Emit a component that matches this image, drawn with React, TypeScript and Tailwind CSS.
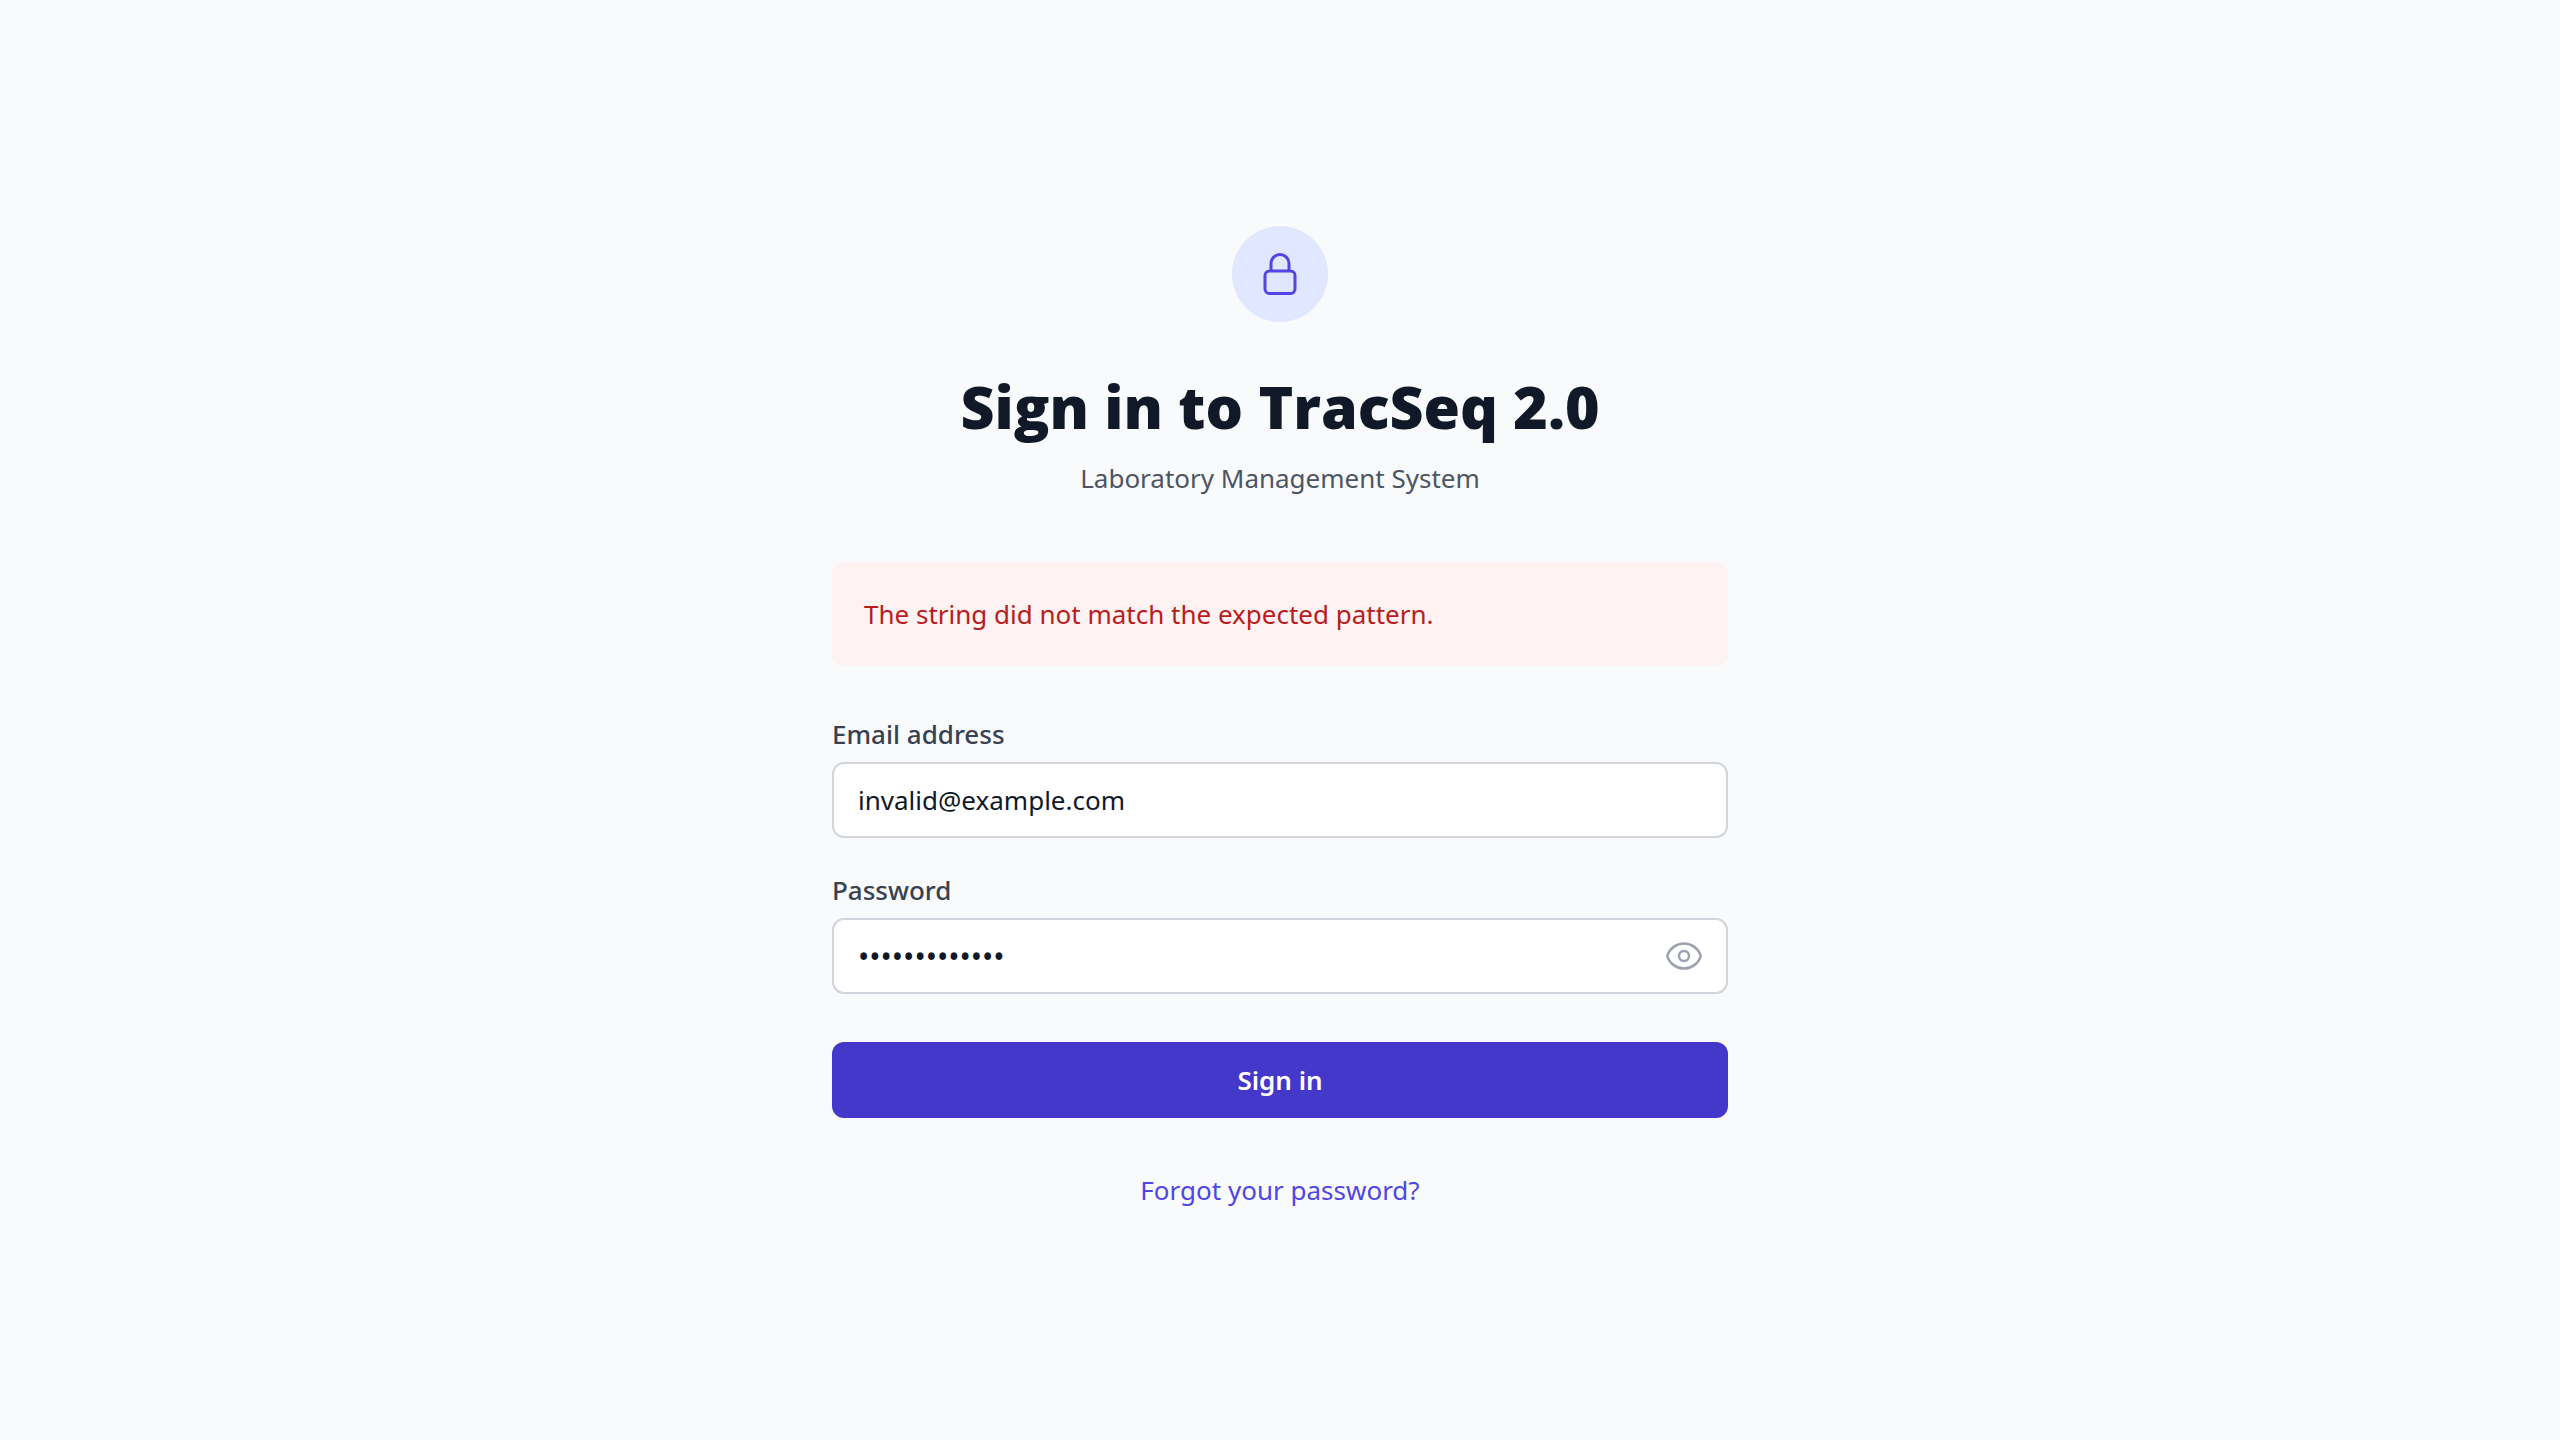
import { useState } from 'react';

function LockIcon() {
  return (
    <svg className="size-12 text-[#4f46e5]" viewBox="0 0 24 24" fill="none" stroke="currentColor" strokeWidth={1.5} strokeLinecap="round" strokeLinejoin="round" aria-hidden="true">
      <path d="M16.5 10.5V6.75a4.5 4.5 0 1 0-9 0v3.75m-.75 11.25h10.5a2.25 2.25 0 0 0 2.25-2.25v-6.75a2.25 2.25 0 0 0-2.25-2.25H6.75a2.25 2.25 0 0 0-2.25 2.25v6.75a2.25 2.25 0 0 0 2.25 2.25Z" />
    </svg>
  );
}

function EyeIcon() {
  return (
    <svg className="size-10" viewBox="0 0 24 24" fill="none" stroke="currentColor" strokeWidth={1.5} strokeLinecap="round" strokeLinejoin="round" aria-hidden="true">
      <path d="M2.036 12.322a1.012 1.012 0 0 1 0-.639C3.423 7.51 7.36 4.5 12 4.5c4.638 0 8.573 3.007 9.963 7.178.07.207.07.431 0 .639C20.577 16.49 16.64 19.5 12 19.5c-4.638 0-8.573-3.007-9.963-7.178Z" />
      <path d="M15 12a3 3 0 1 1-6 0 3 3 0 0 1 6 0Z" />
    </svg>
  );
}

const fieldClass =
  'block h-[76px] w-full rounded-xl border-2 border-[#d1d5db] bg-white px-6 leading-10 text-[#111827] outline-none';
const labelClass = 'block font-medium text-[#374151]';

export default function App() {
  const [email, setEmail] = useState('invalid@example.com');
  const [password, setPassword] = useState('wrongpassword');
  const [visible, setVisible] = useState(false);

  return (
    <div className="flex min-h-screen items-center justify-center bg-[#f9fafb] px-8 py-24 font-['Segoe_UI','Noto_Sans',sans-serif] text-[26px] leading-10">
      <main className="w-full max-w-4xl">
        <div className="mx-auto flex size-24 items-center justify-center rounded-full bg-[#e0e7ff]">
          <LockIcon />
        </div>
        <h2 className="mt-12 text-center font-['Segoe_UI','Open_Sans',sans-serif] text-[59px] leading-[72px] font-extrabold text-[#111827]">
          Sign in to TracSeq 2.0
        </h2>
        <p className="mt-4 text-center text-[#4b5563]">Laboratory Management System</p>

        <form className="mt-16" onSubmit={(e) => e.preventDefault()}>
          <div role="alert" className="rounded-xl bg-[#fef2f2] p-8 text-[#b91c1c]">
            The string did not match the expected pattern.
          </div>

          <div className="mt-12">
            <label htmlFor="email" className={labelClass}>Email address</label>
            <input id="email" type="email" value={email} onChange={(e) => setEmail(e.target.value)} className={`mt-2 text-[26px] ${fieldClass}`} />
          </div>

          <div className="mt-8">
            <label htmlFor="password" className={labelClass}>Password</label>
            <div className="relative mt-2">
              <input
                id="password"
                type={visible ? 'text' : 'password'}
                value={password}
                onChange={(e) => setPassword(e.target.value)}
                className={`${visible ? 'text-[26px]' : 'text-[30px]'} ${fieldClass}`}
              />
              <button type="button" aria-label="Show password" onClick={() => setVisible(!visible)} className="absolute inset-y-0 right-0 flex items-center pr-6 text-[#9ca3af]">
                <EyeIcon />
              </button>
            </div>
          </div>

          <button type="submit" className="mt-12 flex w-full justify-center rounded-xl bg-[#4338ca] px-8 py-[18px] font-semibold text-white">
            Sign in
          </button>

          <div className="mt-12 text-center leading-12">
            <a href="#" className="text-[#4f46e5]">Forgot your password?</a>
          </div>
        </form>
      </main>
    </div>
  );
}
